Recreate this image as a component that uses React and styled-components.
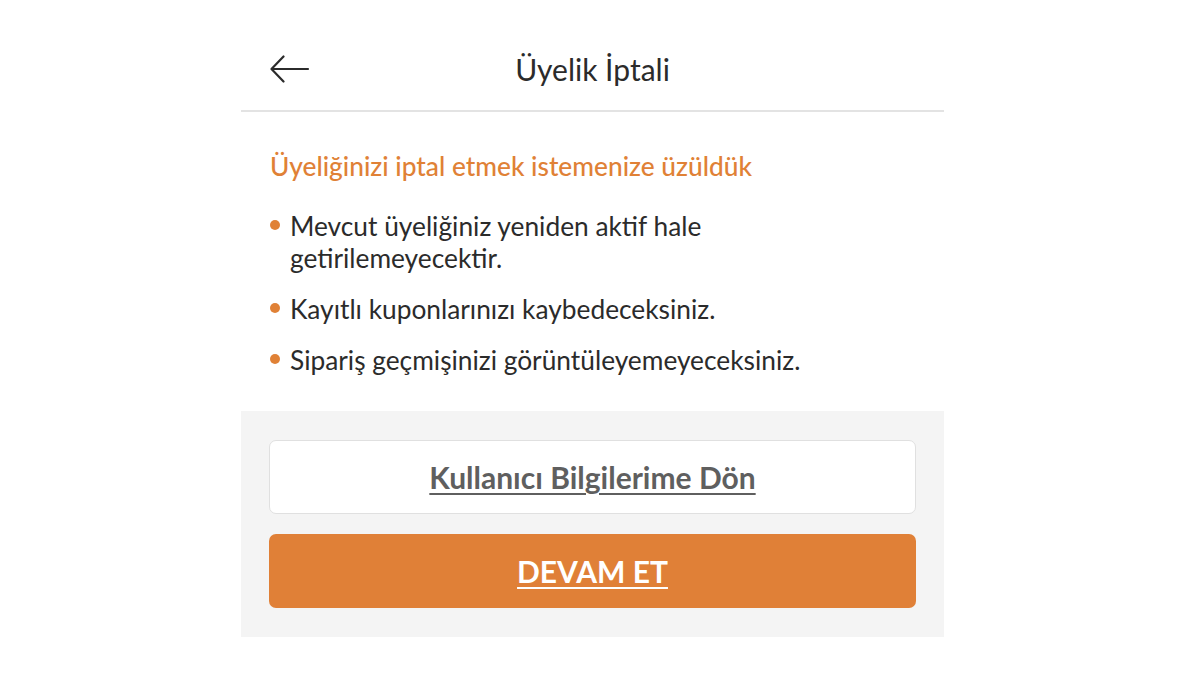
import React from "react";
import styled, { createGlobalStyle } from "styled-components";

const GlobalStyle = createGlobalStyle`
  body {
    margin: 0;
    background: #ffffff;
    font-family: Lato, "Open Sans", sans-serif;
  }
`;

const Page = styled.div`
  width: 1200px;
  height: 675px;
  padding-left: 241px;
  box-sizing: border-box;
`;

const Panel = styled.div`
  width: 703px;
  display: flex;
  flex-direction: column;
`;

const Header = styled.header`
  height: 112px;
  display: grid;
  grid-template-columns: 60px 1fr 60px;
  align-items: center;
  padding: 28px 29px 0;
  border-bottom: 2px solid #e3e3e3;
  box-sizing: border-box;
`;

const BackButton = styled.button`
  border: 0;
  background: none;
  padding: 0;
  display: flex;
  align-items: center;
  cursor: pointer;
`;

const Title = styled.h1`
  margin: 0;
  text-align: center;
  font-size: 30px;
  font-weight: 400;
  color: #2b2b2b;
`;

const Content = styled.section`
  padding: 38px 29px 35px;
`;

const Heading = styled.h2`
  margin: 0 0 28px;
  font-size: 26.3px;
  line-height: 32px;
  font-weight: 500;
  color: #e08136;
`;

const List = styled.ul`
  list-style: none;
  margin: 0;
  padding: 0;
  display: flex;
  flex-direction: column;
  gap: 19px;
`;

const Item = styled.li`
  position: relative;
  padding-left: 20px;
  font-size: 26.3px;
  line-height: 32px;
  color: #2b2b2b;

  &::before {
    content: "";
    position: absolute;
    left: 0;
    top: 10px;
    width: 10px;
    height: 10px;
    border-radius: 50%;
    background: #e08136;
  }
`;

const Actions = styled.div`
  background: #f4f4f4;
  padding: 29px 28px 29px;
  display: flex;
  flex-direction: column;
  gap: 20px;
`;

const ActionButton = styled.button`
  height: 74px;
  border-radius: 7px;
  font-family: Lato, "Open Sans", sans-serif;
  font-size: 30px;
  font-weight: 700;
  text-decoration: underline;
  text-underline-offset: 4px;
  text-decoration-thickness: 2px;
  cursor: pointer;
  border: ${(p) => (p.$primary ? "0" : "1.5px solid #e0e0e0")};
  background: ${(p) => (p.$primary ? "#e08037" : "#ffffff")};
  color: ${(p) => (p.$primary ? "#ffffff" : "#5f5f5f")};
`;

const items = [
  "Mevcut üyeliğiniz yeniden aktif hale getirilemeyecektir.",
  "Kayıtlı kuponlarınızı kaybedeceksiniz.",
  "Sipariş geçmişinizi görüntüleyemeyeceksiniz.",
];

export default function App() {
  return (
    <>
      <GlobalStyle />
      <Page>
        <Panel>
          <Header>
            <BackButton aria-label="Geri">
              <svg width="40" height="30" viewBox="0 0 40 30" fill="none">
                <path
                  d="M38 15H1.5M13.5 2.5L1.5 15L13.5 27.5"
                  stroke="#2b2b2b"
                  strokeWidth="2.2"
                  strokeLinecap="round"
                  strokeLinejoin="round"
                />
              </svg>
            </BackButton>
            <Title>Üyelik İptali</Title>
            <span />
          </Header>
          <Content>
            <Heading>Üyeliğinizi iptal etmek istemenize üzüldük</Heading>
            <List>
              {items.map((t) => (
                <Item key={t}>{t}</Item>
              ))}
            </List>
          </Content>
          <Actions>
            <ActionButton>Kullanıcı Bilgilerime Dön</ActionButton>
            <ActionButton $primary>DEVAM ET</ActionButton>
          </Actions>
        </Panel>
      </Page>
    </>
  );
}
